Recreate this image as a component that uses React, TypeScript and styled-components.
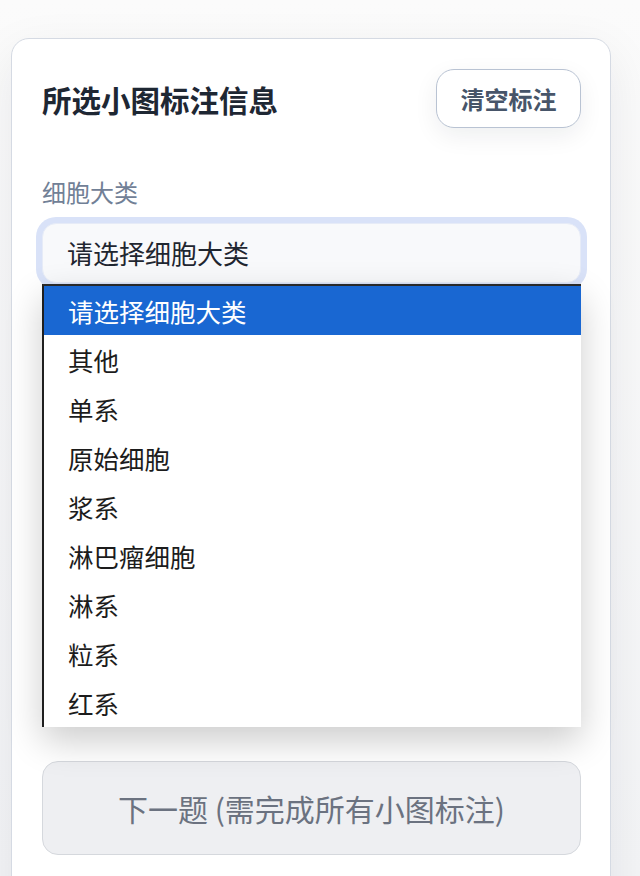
import React from "react";
import styled, { createGlobalStyle } from "styled-components";

const GlobalStyle = createGlobalStyle`
  html, body {
    margin: 0;
    padding: 0;
    background: #f7f8fa;
    font-family: "Noto Sans CJK SC", "Noto Sans", sans-serif;
  }
  #root { min-height: 876px; }
`;

const Page = styled.div`
  height: 876px;
  overflow: hidden;
  padding: 38px 29px 0 11px;
  box-sizing: border-box;
  background: linear-gradient(180deg, #fbfbfb 0%, #f3f4f6 100%);
`;

const Card = styled.section`
  background: #ffffff;
  border: 1px solid #d5dae3;
  border-radius: 18px;
  padding: 30px 29px 40px 30px;
  box-shadow: 0 16px 50px rgba(15, 23, 42, 0.08);
  min-height: 900px;
  box-sizing: border-box;
`;

const Header = styled.div`
  display: flex;
  align-items: center;
  justify-content: space-between;
  height: 59px;
`;

const Title = styled.h2`
  margin: 0;
  font-size: 29.5px;
  font-weight: 700;
  color: #1e2733;
  letter-spacing: 0;
`;

const GhostButton = styled.button`
  width: 145px;
  height: 59px;
  box-sizing: border-box;
  border: 1px solid #b9c3d3;
  border-radius: 18px;
  background: #ffffff;
  color: #475569;
  font-family: inherit;
  font-size: 24px;
  font-weight: 700;
  box-shadow: 0 8px 24px rgba(15, 23, 42, 0.07);
  cursor: pointer;
`;

const Form = styled.div`
  display: flex;
  flex-direction: column;
  gap: 41px;
  margin-top: 46px;
`;

const Field = styled.div`
  display: flex;
  flex-direction: column;
`;

const Label = styled.label`
  font-size: 24px;
  line-height: 36px;
  color: #718096;
  margin-bottom: 13px;
`;

const SelectWrap = styled.div`
  position: relative;
`;

const SelectBox = styled.div`
  height: 60px;
  box-sizing: border-box;
  display: flex;
  align-items: center;
  padding-left: 24px;
  padding-bottom: 2px;
  border-radius: 14px;
  background: #f8f9fb;
  font-size: 26px;
  color: #1f2630;
  box-shadow: 0 0 0 6px #d9e2f8;
  border: 1px solid #e6ebf7;
`;

const Dropdown = styled.ul`
  position: absolute;
  left: 0;
  right: 0;
  top: calc(100% + 1px);
  margin: 0;
  padding: 0;
  list-style: none;
  background: #ffffff;
  border-top: 2px solid #2a2a2a;
  border-left: 2px solid #1f1f1f;
  box-shadow: 0 14px 34px rgba(0, 0, 0, 0.2);
  z-index: 10;
`;

const Option = styled.li<{ $active?: boolean }>`
  height: 49px;
  display: flex;
  align-items: center;
  padding-left: 24px;
  font-size: 25.5px;
  color: ${(p) => (p.$active ? "#ffffff" : "#1c1c1c")};
  background: ${(p) => (p.$active ? "#1967d2" : "transparent")};
`;

const SubFieldsArea = styled.div`
  height: 396px;
`;

const NextButton = styled.button`
  margin-top: 41px;
  width: 100%;
  height: 94px;
  box-sizing: border-box;
  border: 1px solid #d5d8dd;
  border-radius: 16px;
  background: #eeeff2;
  color: #6b7280;
  font-family: inherit;
  font-size: 30px;
  cursor: not-allowed;
`;

const options = [
  "请选择细胞大类",
  "其他",
  "单系",
  "原始细胞",
  "浆系",
  "淋巴瘤细胞",
  "淋系",
  "粒系",
  "红系",
];

export default function App() {
  return (
    <>
      <GlobalStyle />
      <Page>
        <Card>
          <Header>
            <Title>所选小图标注信息</Title>
            <GhostButton>清空标注</GhostButton>
          </Header>
          <Form>
            <Field>
              <Label>细胞大类</Label>
              <SelectWrap>
                <SelectBox>请选择细胞大类</SelectBox>
                <Dropdown>
                  {options.map((o, i) => (
                    <Option key={o} $active={i === 0}>
                      {o}
                    </Option>
                  ))}
                </Dropdown>
              </SelectWrap>
            </Field>
            <SubFieldsArea />
          </Form>
          <NextButton disabled>下一题 (需完成所有小图标注)</NextButton>
        </Card>
      </Page>
    </>
  );
}
